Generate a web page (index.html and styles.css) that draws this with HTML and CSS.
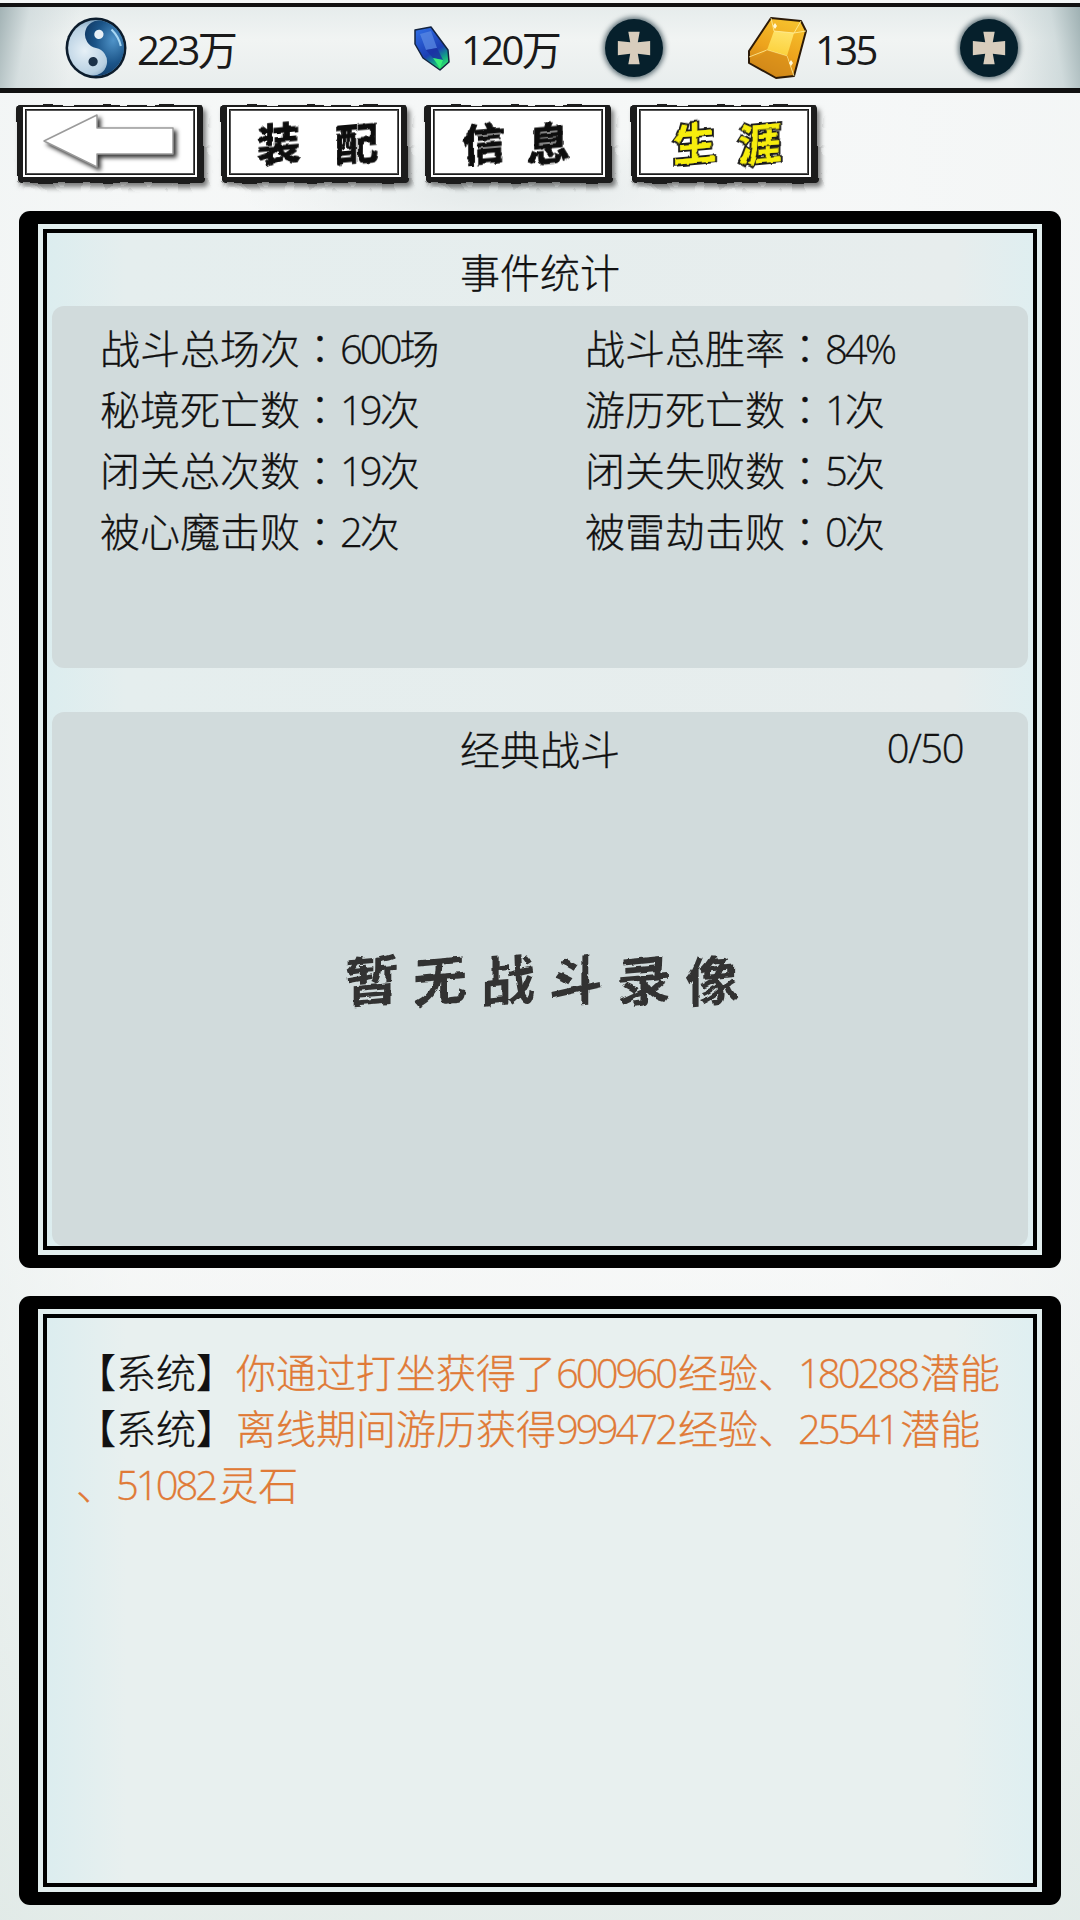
FILE: index.html
```html
<!DOCTYPE html>
<html lang="zh">
<head>
<meta charset="utf-8">
<title>生涯</title>
<link rel="stylesheet" href="styles.css">
</head>
<body>
<svg class="defs" width="0" height="0" aria-hidden="true">
  <defs>
    <filter id="rough" x="-5%" y="-10%" width="110%" height="120%">
      <feTurbulence type="fractalNoise" baseFrequency="0.05" numOctaves="2" seed="4" result="n"/>
      <feDisplacementMap in="SourceGraphic" in2="n" scale="5" xChannelSelector="R" yChannelSelector="G"/>
    </filter>
    <filter id="brush" x="-5%" y="-10%" width="110%" height="120%">
      <feTurbulence type="fractalNoise" baseFrequency="0.11" numOctaves="2" seed="9" result="n"/>
      <feDisplacementMap in="SourceGraphic" in2="n" scale="4" xChannelSelector="R" yChannelSelector="G"/>
    </filter>
    <radialGradient id="ballDark" cx="0.7" cy="0.3" r="0.85">
      <stop offset="0" stop-color="#4f93c8"/>
      <stop offset="0.5" stop-color="#1b5488"/>
      <stop offset="1" stop-color="#0d3058"/>
    </radialGradient>
    <radialGradient id="ballLight" cx="0.3" cy="0.55" r="0.75">
      <stop offset="0" stop-color="#e6f0f7"/>
      <stop offset="0.55" stop-color="#b8d0e2"/>
      <stop offset="1" stop-color="#3f7199"/>
    </radialGradient>
    <linearGradient id="crystal" x1="0.2" y1="0" x2="0.7" y2="1">
      <stop offset="0" stop-color="#2f6ce2"/>
      <stop offset="0.6" stop-color="#1c3fb4"/>
      <stop offset="0.8" stop-color="#129c8a"/>
      <stop offset="1" stop-color="#2ee36c"/>
    </linearGradient>
    <linearGradient id="amber" x1="0.7" y1="0" x2="0.3" y2="1">
      <stop offset="0" stop-color="#f6c22e"/>
      <stop offset="0.55" stop-color="#eda31c"/>
      <stop offset="1" stop-color="#c87f16"/>
    </linearGradient>
    <linearGradient id="amberTable" x1="0.6" y1="0" x2="0.4" y2="1">
      <stop offset="0" stop-color="#ffe36a"/>
      <stop offset="1" stop-color="#fbd03a"/>
    </linearGradient>
  </defs>
</svg>

<header class="topbar">
  <div class="res res-a">
    <svg class="ic-taiji" viewBox="0 0 60 60">
      <circle cx="30" cy="30" r="29.500" fill="#0c1c2c"/>
      <circle cx="30" cy="30" r="27" fill="url(#ballLight)"/>
      <g transform="rotate(12 30 30)">
        <path d="M30 3a27 27 0 0 1 0 54a13.500 13.500 0 0 0 0-27a13.500 13.500 0 0 1 0-27z" fill="url(#ballDark)"/>
        <circle cx="30" cy="16.500" r="4.500" fill="#e8f0f6"/>
        <circle cx="30" cy="43.500" r="4.500" fill="#1c3148"/>
      </g>
      <path d="M45 12q7 7 9 16" stroke="#a8d8f4" stroke-width="2" fill="none"/>
    </svg>
    <span class="res-num">223万</span>
  </div>
  <div class="res res-b">
    <svg class="ic-crystal" viewBox="0 0 37 46">
      <path d="M2 4L18 1L35 24L36 36L27 44L10 32L2 18z" fill="url(#crystal)" stroke="#142440" stroke-width="1.500" stroke-linejoin="round"/>
      <path d="M7 8L18 5L24 22L13 24z" fill="#5c8ce4" opacity="0.7"/>
      <path d="M13 24L24 22L30 34L20 32z" fill="#1a2fa0" opacity="0.8"/>
      <path d="M20 32L30 34L27 42z" fill="#38f07a"/>
    </svg>
    <span class="res-num">120万</span>
  </div>
  <button class="plus plus-b" type="button" aria-label="add">
    <svg viewBox="0 0 40 40"><path d="M14 3H26L24 14L37 12.500V27.500L24 26L26 37H14L16 26L3 27.500V12.500L16 14z" fill="#d8cdbd"/></svg>
  </button>
  <div class="res res-c">
    <svg class="ic-amber" viewBox="0 0 62 64">
      <path d="M24 2L54 5L59 15L47 60L29 62L2 47V35z" fill="url(#amber)" stroke="#2c1a08" stroke-width="2" stroke-linejoin="round"/>
      <path d="M27 15L47 17L40 40L20 34z" fill="url(#amberTable)"/>
      <path d="M24 2L27 15L47 17L54 5M47 17L59 15M40 40L47 60M20 34L2 41M20 34L40 40" stroke="#fff0a0" stroke-width="1" fill="none" opacity="0.8"/>
      <path d="M20 34L40 40L45 58L29 60L6 46z" fill="#d58c1a" opacity="0.6"/>
      <path d="M28 7l2 3l-2 3l-2-3zM44 44l2 3l-2 3l-2-3z" fill="#fff8d8"/>
    </svg>
    <span class="res-num">135</span>
  </div>
  <button class="plus" type="button" aria-label="add">
    <svg viewBox="0 0 40 40"><path d="M14 3H26L24 14L37 12.500V27.500L24 26L26 37H14L16 26L3 27.500V12.500L16 14z" fill="#d8cdbd"/></svg>
  </button>
</header>

<nav class="tabs">
  <button class="tab tab-back" type="button" aria-label="back">
    <span class="tab-ink"></span><span class="tab-face"></span>
    <svg class="ic-back" viewBox="0 0 131 54">
      <path d="M1 27L54 1V14H130V40H54V53z" fill="#fff" stroke="#9a9a9a" stroke-width="1.500" stroke-linejoin="round"/>
    </svg>
  </button>
  <button class="tab tab-wide" type="button"><span class="tab-ink"></span><span class="tab-face"></span><span class="tab-label">装</span><span class="tab-label">配</span></button>
  <button class="tab tab-info" type="button"><span class="tab-ink"></span><span class="tab-face"></span><span class="tab-label">信</span><span class="tab-label">息</span></button>
  <button class="tab tab-on" type="button"><span class="tab-ink"></span><span class="tab-face"></span><span class="tab-label">生</span><span class="tab-label">涯</span></button>
</nav>

<main class="content">
  <section class="panel panel-stats">
    <div class="panel-inner">
      <h2 class="panel-title">事件统计</h2>
      <div class="box box-stats">
        <div class="stat-grid">
          <p>战斗总场次<span class="colon" lang="zh-TW">：</span><span class="num">600</span>场</p><p>战斗总胜率<span class="colon" lang="zh-TW">：</span><span class="num">84%</span></p>
          <p>秘境死亡数<span class="colon" lang="zh-TW">：</span><span class="num">19</span>次</p><p>游历死亡数<span class="colon" lang="zh-TW">：</span><span class="num">1</span>次</p>
          <p>闭关总次数<span class="colon" lang="zh-TW">：</span><span class="num">19</span>次</p><p>闭关失败数<span class="colon" lang="zh-TW">：</span><span class="num">5</span>次</p>
          <p>被心魔击败<span class="colon" lang="zh-TW">：</span><span class="num">2</span>次</p><p>被雷劫击败<span class="colon" lang="zh-TW">：</span><span class="num">0</span>次</p>
        </div>
      </div>
      <div class="box box-battle">
        <div class="battle-head">
          <h2 class="battle-title">经典战斗</h2>
          <span class="battle-count num">0/50</span>
        </div>
        <div class="battle-empty"><span>暂</span><span>无</span><span>战</span><span>斗</span><span>录</span><span>像</span></div>
      </div>
    </div>
  </section>

  <section class="panel panel-log">
    <div class="panel-inner log-inner">
      <p class="log-line"><span class="log-tag">【系统】</span><span class="log-msg">你通过打坐获得了<span class="num">600960</span>经验、<span class="num">180288</span>潜能</span></p>
      <p class="log-line"><span class="log-tag">【系统】</span><span class="log-msg">离线期间游历获得<span class="num">999472</span>经验、<span class="num">25541</span>潜能</span></p>
      <p class="log-line"><span class="log-msg">、<span class="num">51082</span>灵石</span></p>
    </div>
  </section>
</main>
</body>
</html>
```

FILE: styles.css
```css
* { box-sizing: border-box; }
html, body { margin: 0; padding: 0; }
body {
  width: 1080px;
  height: 1920px;
  overflow: hidden;
  display: flex;
  flex-direction: column;
  font-family: "Noto Sans CJK SC", "Noto Sans", sans-serif;
  font-weight: 300;
  color: #111;
  background:
    radial-gradient(ellipse 260px 60px at 500px 190px, #e3e9e9 0, rgba(227,233,233,0) 100%),
    linear-gradient(180deg, rgba(245,247,247,0.9) 0, rgba(247,248,248,0.6) 65%, rgba(225,234,231,0.8) 100%),
    linear-gradient(90deg, #e3ecea 0, #f4f6f5 12%, #f7f8f8 80%, #e9efee 100%);
}
.defs { position: absolute; }
.num {
  font-family: "Open Sans", "Noto Sans", sans-serif;
  font-weight: 300;
  letter-spacing: -3px;
}
.log-line .num { margin-right: 3px; }
.colon { font-family: "Noto Sans CJK TC", "Noto Sans CJK SC", sans-serif; }

/* top bar */
.topbar {
  flex: none;
  height: 90px;
  margin-top: 3px;
  border-top: 4px solid #111;
  border-bottom: 5px solid #111;
  display: flex;
  align-items: center;
  background:
    linear-gradient(100deg, #a3b3b5 0, rgba(200,212,214,0.6) 30px, rgba(236,241,241,0) 80px),
    linear-gradient(260deg, #9fb1b3 0, rgba(190,205,207,0.6) 30px, rgba(236,241,241,0) 80px),
    linear-gradient(180deg, #e6ecec 0, #f1f4f3 40%, #e8eded 100%);
}
.res { display: flex; align-items: center; flex: none; }
.res-num {
  font-family: "Open Sans", "Noto Sans CJK SC", sans-serif;
  font-weight: 400;
  font-size: 40px;
  letter-spacing: -2.600px;
  line-height: 1;
  margin-top: 4px;
  color: #1a1a1a;
}
.res-a { margin-left: 65px; gap: 10px; width: 348px; }
.res-b { gap: 11px; width: 147px; }
.res-c { margin-left: 84px; gap: 6px; width: 213px; }
.ic-taiji { width: 62px; height: 62px; }
.ic-crystal { width: 37px; height: 46px; margin-top: 2px; }
.ic-amber { width: 62px; height: 64px; }
.plus {
  flex: none;
  width: 58px;
  height: 58px;
  padding: 10px;
  border: 0;
  border-radius: 50%;
  background: #06202c;
  box-shadow: 0 0 5px 2px rgba(6,32,44,0.6);
  display: block;
}
.plus svg { display: block; width: 38px; height: 38px; }
.plus-b { margin-left: 45px; }

/* tabs */
.tabs {
  flex: none;
  display: flex;
  gap: 14px;
  padding: 12px 0 0 17px;
  height: 96px;
}
.tab {
  position: relative;
  flex: none;
  width: 190px;
  height: 78px;
  padding: 0 0 6px 0;
  border: 0;
  background: none;
  display: flex;
  align-items: center;
  justify-content: center;
  gap: 22px;
  font-family: "Noto Sans CJK SC", sans-serif;
}
.tab-back { padding-right: 7px; }
.tab-wide { gap: 35px; padding-left: 2px; }
.tab-info { padding-right: 8px; }
.tab-on { margin-left: 2px; padding-left: 2px; }
.tab-ink {
  position: absolute;
  left: 0; right: 3px; top: 0; bottom: 0;
  background: #1a1a1a;
  border-radius: 4px;
  box-shadow: 3px 4px 5px rgba(0,0,0,0.5);
  filter: url(#rough);
}
.tab-face {
  position: absolute;
  left: 9px; right: 13px; top: 5px; bottom: 9px;
  background: #fff;
  border: 1px solid #555;
  outline: 2px solid #fff;
  outline-offset: 1px;
}
.tab-label {
  position: relative;
  font-size: 43px;
  font-weight: 700;
  line-height: 1;
  color: #0a0a0a;
  transform: skewY(-5deg);
  -webkit-text-stroke: 1px #0a0a0a;
  filter: url(#brush);
}
.tab-on .tab-label {
  color: #f7ee10;
  -webkit-text-stroke: 4px #1c1c1c;
  paint-order: stroke fill;
}
.ic-back {
  position: relative;
  width: 131px;
  height: 54px;
  overflow: visible;
  filter: drop-shadow(3px 3px 2px rgba(0,0,0,0.8));
}

/* panels */
.content {
  flex: 1;
  min-height: 0;
  display: flex;
  flex-direction: column;
  gap: 28px;
  padding: 22px 19px 15px;
}
.panel {
  display: flex;
  padding: 13px 19px;
  background: #000;
  border-radius: 11px;
}
.panel-stats { flex: none; height: 1057px; }
.panel-log { flex: 1; min-height: 0; }
.panel-inner {
  flex: 1;
  min-width: 0;
  display: flex;
  flex-direction: column;
  border: 4px solid #000;
  outline: 5px solid #e2eeee;
  background: linear-gradient(90deg, #dcedef 0, #e5eeee 8%, #e7eded 92%, #dfeef0 100%);
  padding: 0 5px;
  margin: 5px;
}

.panel-title, .battle-title {
  margin: 0;
  font-size: 40px;
  font-weight: 300;
  line-height: 1;
  text-align: center;
  -webkit-text-stroke: 0.3px #111;
}
.panel-title { height: 73px; padding-top: 18px; }
.box {
  background: #d1dbdc;
  border-radius: 12px;
}
.box-stats { flex: none; height: 362px; padding: 11px 0 0 48px; }
.stat-grid {
  display: grid;
  grid-template-columns: 485px 1fr;
}
.stat-grid p {
  margin: 0;
  height: 61px;
  font-size: 40px;
  line-height: 61px;
  white-space: nowrap;
  -webkit-text-stroke: 0.3px #111;
}
.box-battle {
  flex: 1;
  min-height: 0;
  margin-top: 44px;
  display: flex;
  flex-direction: column;
}
.battle-head { position: relative; flex: none; padding-top: 16px; }
.battle-count {
  position: absolute;
  right: 65px;
  top: 16px;
  font-size: 40px;
  line-height: 1;
  letter-spacing: -1.500px;
  -webkit-text-stroke: 0.3px #111;
}
.battle-empty {
  display: flex;
  justify-content: center;
  gap: 14px;
  margin-top: 183px;
  padding-left: 4px;
  font-size: 54px;
  font-weight: 700;
  line-height: 1;
  color: #333;
  filter: url(#brush);
}
.battle-empty span { transform: skewY(-5deg); }
.log-inner {
  padding: 25px 0 0 29px;
  background: linear-gradient(90deg, #dcedef 0, #e8f0ef 8%, #e8f0ef 92%, #dfeff1 100%);
}
.log-line {
  margin: 0;
  height: 56px;
  font-size: 40px;
  line-height: 56px;
  white-space: nowrap;
  -webkit-text-stroke: 0.3px currentColor;
}
.log-tag { color: #111; }
.log-msg { color: #e07a36; }
```
